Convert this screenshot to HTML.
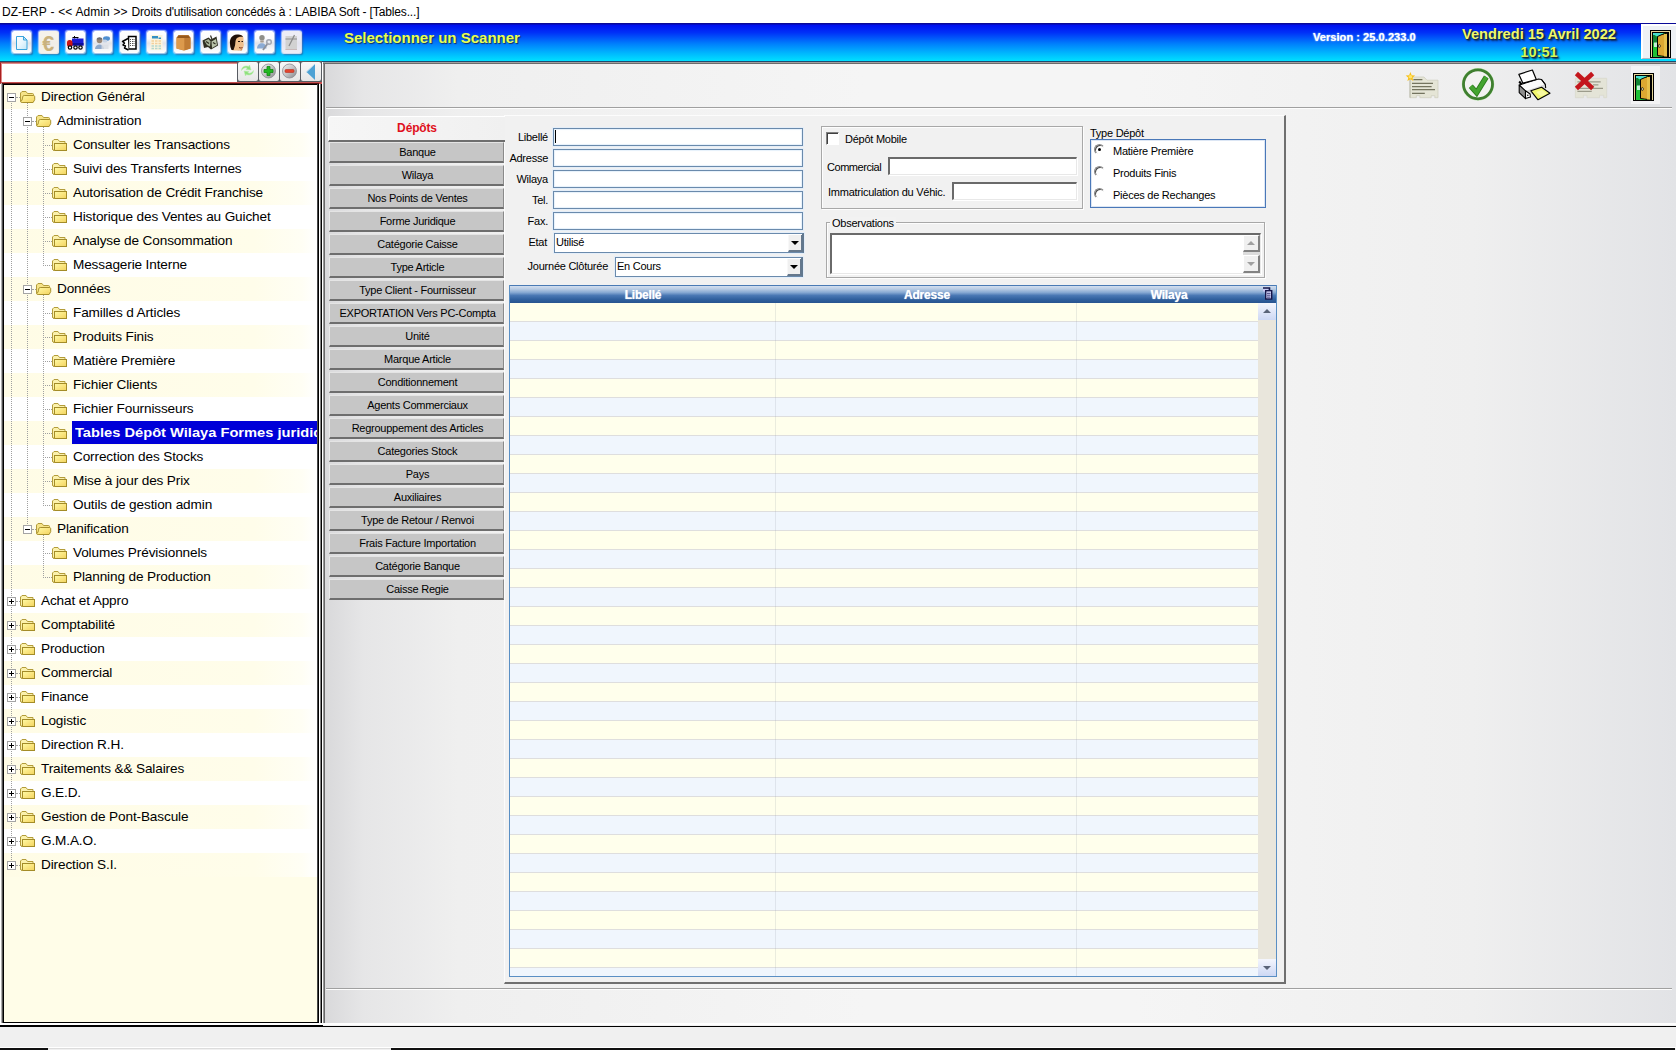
<!DOCTYPE html><html lang="fr"><head><meta charset="utf-8"><title>DZ-ERP</title><style>
*{box-sizing:border-box;margin:0;padding:0}
html,body{width:1676px;height:1050px;overflow:hidden;background:#f0f0f0;font-family:"Liberation Sans",sans-serif;}
body{position:relative}
.abs,.abs *{position:absolute}
#title{left:0;top:0;width:1676px;height:23px;background:#fff}
#title span{left:2px;top:5px;font-size:12px;line-height:14px;color:#000;white-space:pre;letter-spacing:-0.145px}
#title span i{position:static;font-style:normal;word-spacing:0.6px;letter-spacing:0}
#hdr{left:0;top:23px;width:1676px;height:38px;background:linear-gradient(#0a0a98 0,#0a0a98 1px,#0010f0 2px,#0030f8 25%,#0080fc 55%,#00b8fe 80%,#00e0ff 100%)}
#hdrline{left:0;top:61px;width:1676px;height:1px;background:#1c4a70}
#hdrline2{left:0;top:62px;width:1676px;height:1px;background:#9a9a9a}
.tb{width:19px;height:22px;top:8px;border-radius:2px;background:linear-gradient(#ffffff 0,#fbfbfd 35%,#e2e4ea 55%,#f4f5f8 80%,#ffffff 100%);box-shadow:0 0 1.500px 1px rgba(215,228,255,.9),1.500px 2px 1.500px 0 rgba(20,50,110,.55)}
.tb svg{left:0;top:0}
#scan{left:344px;top:6px;font:bold 15px/17px "Liberation Sans",sans-serif;color:#e8ff50;white-space:pre;text-shadow:1px 1px 1px #103060}
#ver{left:1313px;top:8px;font:bold 11px/13px "Liberation Sans",sans-serif;color:#fff;white-space:pre;text-shadow:0 0 1px #b8d8ff,0 0 2px #80b0ff;letter-spacing:.06px}
#date{left:1439px;top:2px;width:200px;text-align:center;font:bold 14.6px/18px "Liberation Sans",sans-serif;color:#eff86c;white-space:pre;text-shadow:1px 1px 1px #1c2430,2px 2px 2px #0c2858}
#date i{position:static;font-style:normal;color:#d4f858}
#exitbox{left:1641px;top:1px;width:35px;height:35px;background:#eef1f5;border-left:2px solid #fff;border-top:2px solid #fff;border-bottom:1px solid #b0b8c0}
/* left */
#left{left:0;top:62px;width:323px;height:963px;background:#fff}
#search{left:0;top:0;width:322px;height:22px;border-left:1px solid #a82020;border-top:1px solid #a05050;border-bottom:2px solid #c85050;background:#fff;box-shadow:inset 1px 1px 0 #e08888}
#searchr{left:237px;top:61px;width:85px;height:21px;background:#585c62}
.sb{top:1px;width:20px;height:19px;background:linear-gradient(#f8f8f8,#e6e6e6);border-radius:2px}
#tree{left:2px;top:21px;width:317px;height:940px;border:1px solid #000;border-left:2px solid #000;border-top:2px solid #000;border-left-color:#000;background:#fffde8;overflow:hidden;box-shadow:-1px 0 0 #b0b0b0}
#treeb{left:2px;top:83px;width:1px;height:940px;background:#505050}
#treet{left:2px;top:83px;width:317px;height:1px;background:#501010}
#treer{left:317px;top:84px;width:1px;height:938px;background:#484848}
.row{left:0;width:313px;height:24px}
.row.y{background:linear-gradient(90deg,#fffce6 0,#fffdea 80%,#fffef4 95%,#fff 100%)}
.row.w{background:#fff}
.lbl{top:3px;font-size:13.6px;line-height:18px;color:#000;white-space:pre;letter-spacing:-0.13px}
.sel{top:0;height:23px;background:#0000d8;color:#fff;font-weight:bold;padding:0;width:400px}
.sel span{left:2.5px;top:3px;font:bold 13.33px/18px "Liberation Sans",sans-serif;white-space:pre;transform-origin:0 0;transform:scaleX(1.1)}
.exp{width:9px;height:9px;border:1px solid #a4a4a4;background:#fff;top:8px;z-index:2}
.exp i{left:1px;top:3px;width:5px;height:1px;background:#000}
.exp b{left:3px;top:1px;width:1px;height:5px;background:#000}
.vl{width:0;border-left:1px dotted #a0a0a0}
.hl{height:0;border-top:1px dotted #a0a0a0}
#lsplit{left:319px;top:84px;width:4px;height:941px;background:linear-gradient(90deg,#fff 0,#fff 25%,#808080 25%,#808080 50%,#000 50%,#000 75%,#fff 75%)}
/* main */
#main{left:323px;top:62px;width:1353px;height:962px;background:linear-gradient(90deg,#d8d8da 0,#e6e6e7 3%,#efefef 10%,#f5f5f5 40%,#f5f5f5 60%,#efefef 85%,#e2e3e6 100%)}
#mainl{left:323px;top:62px;width:2px;height:962px;background:linear-gradient(90deg,#989898 50%,#686868 50%)}
#mainl2{left:323px;top:62px;width:1353px;height:2px;background:linear-gradient(#a0a0a0 50%,#6c6c6c 50%)}
#sep1{left:326px;top:107px;width:1346px;height:1px;background:#a0a0a0}
#sep1b{left:326px;top:108px;width:1346px;height:1px;background:#fdfdfd}
#sep2{left:326px;top:988px;width:1346px;height:1px;background:#a0a0a0}
#sep2b{left:326px;top:989px;width:1346px;height:1px;background:#fdfdfd}
#panel{left:504px;top:115px;width:782px;height:869px;border-right:2px solid #707070;border-bottom:2px solid #707070;border-left:1px solid #fcfcfc;border-top:1px solid #fcfcfc;background:#f1f1f1}
.btn{left:329px;width:175px;height:21px;background:#c6c6c6;border-top:1px solid #e4e4e4;border-left:1px solid #e8e8e8;border-bottom:2px solid #6e6e6e;border-right:1px solid #8a8a8a;font-size:11px;line-height:18px;text-align:center;color:#000;white-space:pre;letter-spacing:-0.25px;padding-left:2px}
#dep{left:328px;top:116px;width:177px;height:26px;border-top:1px solid #fff;border-left:1px solid #fff;border-bottom:2px solid #6e6e6e;border-radius:3px 0 0 0;background:linear-gradient(90deg,#f6f6f6,#f0f0f0);font:bold 12px/23px "Liberation Sans",sans-serif;color:#e01020;text-align:center;letter-spacing:-0.15px}
.lab{font-size:11px;line-height:13px;color:#000;white-space:pre;letter-spacing:-0.25px}
.labr{text-align:right;width:120px}
.inp{background:#fff;border:1px solid #6a8aac;box-shadow:inset 0 0 1px 1px #e6f1fb,0 0 0 1px #e4eef9;height:18px}
.sunk{background:#fff;border-top:2px solid #6a6a6a;border-left:2px solid #6a6a6a;border-right:1px solid #e8e8e8;border-bottom:1px solid #e8e8e8;box-shadow:1px 1px 0 #fff}
.combo{background:#fff;border:1px solid #6a8aac;border-right:2px solid #62788e;box-shadow:0 0 0 1px #e4eef9;height:20px}
.combo .lab{left:1px;top:2px}
.cbtn{right:0;top:1px;width:14px;height:17px;background:#f0f0f0;border-bottom:2px solid #66788c;border-right:1px solid #66788c;border-left:1px solid #f8f8f8}
.cbtn i{left:2px;top:6px;width:0;height:0;border-left:4px solid transparent;border-right:4px solid transparent;border-top:4px solid #000}
.grp{border:1px solid #a8a8a8;box-shadow:inset 1px 1px 0 #fdfdfd,1px 1px 0 #fdfdfd}
.radio{width:11px;height:11px;border-radius:50%;background:#fff;border:1px solid #8a8a8a;border-right-color:#fff;border-bottom-color:#fff;box-shadow:inset 1px 1px 0 #505050;transform:rotate(0deg)}
.radio i{left:3px;top:3px;width:3px;height:3px;border-radius:50%;background:#000}
/* grid */
#grid{left:509px;top:285px;width:768px;height:692px;border:1px solid #5a8fc4;border-top:none;background:#fff;overflow:hidden}
#ghead{left:0;top:0;width:766px;height:18px;background:linear-gradient(#4a7ab4 0,#4a7ab4 1px,#d2deef 1px,#b9cce4 22%,#86a8d2 42%,#4a78b4 58%,#30609e 80%,#27548f 100%)}
.gh{top:3px;font:bold 12px/14px "Liberation Sans",sans-serif;color:#fff;white-space:pre;text-shadow:0 0 1px #e6eef8;letter-spacing:-0.2px;transform:translateX(-50%)}
.gr{left:0;width:748px;height:19px;border-bottom:1px solid #dedede}
.gr.y{background:#ffffec}
.gr.b{background:#f0f6fd}
.gv{top:18px;width:1px;height:674px;background:rgba(150,160,170,.2)}
#gsb{left:748px;top:18px;width:18px;height:673px;background:#e9e6dc}
.gsbtn{left:0;width:18px;height:17px;background:linear-gradient(#f4f6fd,#cdd8f4)}
</style></head><body class="abs">
<svg width="0" height="0" style="left:0;top:0"><defs><linearGradient id="cg" x1="0" y1="0" x2="1" y2="1"><stop offset="0" stop-color="#f2f2f2"/><stop offset=".5" stop-color="#c4c4c6"/><stop offset="1" stop-color="#86868a"/></linearGradient><linearGradient id="pg" x1="0" y1="0" x2="1" y2="1"><stop offset="0" stop-color="#ffffff"/><stop offset=".5" stop-color="#e8f6fd"/><stop offset="1" stop-color="#bfe6f8"/></linearGradient><linearGradient id="fg" x1="0" y1="0" x2="1" y2="1"><stop offset="0" stop-color="#fffba4"/><stop offset=".6" stop-color="#f9e27a"/><stop offset="1" stop-color="#f1d460"/></linearGradient></defs></svg>
<div id="title"><span><i>DZ-ERP - &lt;&lt; Admin &gt;&gt; </i>Droits d'utilisation concédés à : LABIBA Soft - [Tables...]</span></div>
<div id="hdr">
<div class="tb" style="left:12px"><svg width="20" height="23" viewBox="0 0 20 23"><path d="M4.500 5.500h7l3.500 3.500v9.500h-10.500z" fill="url(#pg)" stroke="#3aa4dc" stroke-width="1"/><path d="M11.500 5.500v3.500h3.500z" fill="#bfe4f8" stroke="#3aa4dc" stroke-width="1" stroke-linejoin="round"/></svg></div>
<div class="tb" style="left:39px"><svg width="20" height="23" viewBox="0 0 20 23"><rect x="0" y="0" width="20" height="23" rx="2" fill="#f3efe6" opacity=".8"/><text x="9.300" y="19.600" font-family="Liberation Sans,sans-serif" font-weight="bold" font-size="21.500" text-anchor="middle" fill="#c9b27e">€</text></svg></div>
<div class="tb" style="left:66px"><svg width="20" height="23" viewBox="0 0 20 23"><path d="M6.500 6.500h6M8.500 5v2.500M11.500 6.500v1" stroke="#000" stroke-width="1" fill="none"/><rect x="6" y="7.500" width="11.500" height="7" fill="#1a1ad2"/><rect x="6" y="12" width="11.500" height="2.500" fill="#0c0c9a"/><rect x="1" y="9" width="5.500" height="7" rx="2.500" fill="#cc1414"/><circle cx="4" cy="16.500" r="1.700" fill="#fff" stroke="#000" stroke-width="1.200"/><circle cx="9.500" cy="16.500" r="1.700" fill="#fff" stroke="#000" stroke-width="1.200"/><circle cx="14.500" cy="16.500" r="1.700" fill="#fff" stroke="#000" stroke-width="1.200"/></svg></div>
<div class="tb" style="left:93px"><svg width="20" height="23" viewBox="0 0 20 23"><ellipse cx="13.500" cy="7.500" rx="3.500" ry="2.300" fill="#4f8fd0"/><ellipse cx="12" cy="10" rx="2.500" ry="1.500" fill="#c7d4e6"/><circle cx="6.500" cy="9.500" r="2.800" fill="#9a8878"/><path d="M3.500 8.500c.5-3 5.500-3 6 0z" fill="#6c6c70"/><path d="M2 18c0-6 9-6 9 0z" fill="#8fa9cc"/><path d="M8.500 13.500h7v4.500h-7z" fill="#d9dde3" opacity=".8"/></svg></div>
<div class="tb" style="left:120px"><svg width="20" height="23" viewBox="0 0 20 23"><path d="M8.500 5.500h7.500v12.500h-7.500z" fill="#fff" stroke="#000" stroke-width="1.500"/><path d="M8 7.500l-5.500 3 2 1.500-1.500 2 2.500 1-1 2 4 2" fill="#fff" stroke="#000" stroke-width="1.500" stroke-linejoin="round"/><path d="M10.500 8v8M12.500 8v8M14 8v8" stroke="#555" stroke-width="1" stroke-dasharray="1 1"/></svg></div>
<div class="tb" style="left:147px"><svg width="20" height="23" viewBox="0 0 20 23"><rect x="3.500" y="4" width="12" height="15" fill="#fbf4de"/><rect x="5" y="5" width="6" height="2.500" fill="#3391c4"/><rect x="11.500" y="6.500" width="2.500" height="1.500" fill="#3391c4"/><path d="M4.500 10h10M4.500 12.500h10" stroke="#f3cf9c" stroke-width="1.300" stroke-dasharray="2.500 1"/><path d="M4.500 15h10M4.500 17.500h10" stroke="#b4d6cf" stroke-width="1.300" stroke-dasharray="2.500 1"/></svg></div>
<div class="tb" style="left:174px"><svg width="20" height="23" viewBox="0 0 20 23"><path d="M2.500 6.500l2-2.500h10l2 2.500v11l-7 2-7-2z" fill="#c9853a"/><path d="M4.500 4.500h10l1.500 2.500h-13z" fill="#96591c"/><path d="M2.500 7h8v12.500l-8-2z" fill="#dc9a4c"/><path d="M10.500 7h6v10.500l-6 2z" fill="#c07c34"/></svg></div>
<div class="tb" style="left:201px"><svg width="20" height="23" viewBox="0 0 20 23"><path d="M1.500 9.500l6-3 2.500 2 5.500-3 1.500 9-7 4-3-2.500-4 1z" fill="#2f2f22"/><path d="M3.500 10l4-2 2 2.500-.5 5-3-1.500z" fill="#a9b59a"/><path d="M10.500 10.500l4.500-2.500 1 6-5 3z" fill="#b9c3aa"/><path d="M9.500 4.500l2 5" stroke="#2f2f22" stroke-width="1.200"/><path d="M5 10.500l3 2M12 11.500l2.500 1.500" stroke="#2f2f22" stroke-width="1.200"/></svg></div>
<div class="tb" style="left:228px"><svg width="20" height="23" viewBox="0 0 20 23"><path d="M4.500 19.500c-1.500-3-2.500-6-2-9.500c1-4 5-6 9-6c3 0 4 1.500 4 3.500v5c.5 1 .5 2 0 3-.5 2-2 4-4 4z" fill="#efbf8c"/><path d="M2 13c-.5-5 1.500-9 7-9.500c3-.3 5.500.5 6 2.500-2.500-.5-5 0-6.500 1.500-1.500 2-1 5-1.500 7l-1.500 4.500h-2c-1-2-1.500-4-1.500-6z" fill="#1e0f08"/><path d="M10 10.500h2M13.500 10.500h1.500" stroke="#1e0f08" stroke-width="1.200"/><path d="M11 16.500c1.500.8 2.500.5 3.500 0" stroke="#7a2b14" stroke-width="1" fill="none"/><path d="M9 19.500c2 .5 4-.5 5.500-2.500l-.5 2.500z" fill="#c8854e"/></svg></div>
<div class="tb" style="left:255px"><svg width="20" height="23" viewBox="0 0 20 23"><circle cx="7" cy="6.800" r="2.700" fill="#8f8f88"/><path d="M5 9.500h4l-.5 2h-3z" fill="#a89c90"/><path d="M2 17.500c0-7 9.500-7 9.500 0z" fill="#8cabd4"/><path d="M8 19l5-7" stroke="#8e929c" stroke-width="1.800"/><circle cx="14" cy="11" r="2.300" fill="none" stroke="#a4a8b2" stroke-width="1.500"/></svg></div>
<div class="tb" style="left:282px"><svg width="20" height="23" viewBox="0 0 20 23"><rect x="0" y="0" width="20" height="23" rx="2" fill="#e6e6f2" opacity=".7"/><rect x="3.500" y="5" width="11.500" height="14" fill="#d2d2d2"/><rect x="3.500" y="7.300" width="11.500" height="1.400" fill="#a2a2a2"/><path d="M12.500 4l-5.500 11" stroke="#8a8a8a" stroke-width="1.300"/><rect x="3.500" y="18.300" width="11.500" height=".7" fill="#c8b0b0"/></svg></div>
<div id="scan">Selectionner un Scanner</div>
<div id="ver">Version : 25.0.233.0</div>
<div id="date">Vendredi 15 Avril 2022
<i>10:51</i></div>
<div id="exitbox"><svg width="21" height="28" viewBox="0 0 21 28" style="left:7px;top:4px"><rect width="21" height="28" fill="#000"/><rect x="1" y="1" width="19" height="26" fill="#e6d596"/><rect x="2" y="2" width="17" height="26" fill="#000"/><rect x="3" y="3" width="15" height="24" fill="#1fc035"/><rect x="3" y="3" width="10" height="3" fill="#48e0d0"/><path d="M3 5h2l2 3v4l-2 1.500-2-1z" fill="#128434"/><rect x="4" y="12.500" width="3" height="4.500" fill="#c4f2d8"/><path d="M7.500 6.500l4.500-2 5.500-1.500v24l-6-1-4-.5z" fill="#dca832" stroke="#000" stroke-width="1"/><rect x="14" y="4" width="3" height="22.500" fill="#e6c04a"/><ellipse cx="9.300" cy="16" rx="1" ry="1.500" fill="#fff8c0" stroke="#000" stroke-width=".7"/></svg></div>
</div><div id="hdrline"></div><div id="hdrline2"></div>
<div id="left"><div id="search"></div>
<div id="tree">
<div class="row y" style="top:0px">
<div class="exp" style="left:3px"><i></i></div>
<div class="hl" style="left:12px;top:12px;width:4px"></div>
<svg width="16" height="12" viewBox="0 0 16 12" style="left:16px;top:6px"><path d="M.5 10.500v-8.500l1.500-1.500h4l1.500 2h5c.6 0 1 .4 1 1v1.500h-10l-1.500 5.500z" fill="#f6e488" stroke="#b39c3a" stroke-width="1" stroke-linejoin="round"/><path d="M.7 10.600c1.200-.8 1.600-2.200 2-4.400c.2-1.200.6-1.700 1.600-1.700h9c1 0 1.400.5 1.400 1.400v2.800l-1.600 2.800h-11c-.8 0-1.300-.3-1.400-.9z" fill="url(#fg)" stroke="#a8902c" stroke-width="1" stroke-linejoin="round"/></svg>
<div class="lbl" style="left:37px">Direction Général</div>
</div>
<div class="row w" style="top:24px">
<div class="exp" style="left:19px"><i></i></div>
<div class="hl" style="left:28px;top:12px;width:4px"></div>
<svg width="16" height="12" viewBox="0 0 16 12" style="left:32px;top:6px"><path d="M.5 10.500v-8.500l1.500-1.500h4l1.500 2h5c.6 0 1 .4 1 1v1.500h-10l-1.500 5.500z" fill="#f6e488" stroke="#b39c3a" stroke-width="1" stroke-linejoin="round"/><path d="M.7 10.600c1.200-.8 1.600-2.200 2-4.400c.2-1.200.6-1.700 1.600-1.700h9c1 0 1.400.5 1.400 1.400v2.800l-1.600 2.800h-11c-.8 0-1.300-.3-1.400-.9z" fill="url(#fg)" stroke="#a8902c" stroke-width="1" stroke-linejoin="round"/></svg>
<div class="lbl" style="left:53px">Administration</div>
</div>
<div class="row y" style="top:48px">
<div class="hl" style="left:39px;top:12px;width:9px"></div>
<svg width="16" height="12" viewBox="0 0 16 12" style="left:48px;top:6px"><path d="M.5 10.500v-8.500l1.500-1.500h4l1.500 2h5.500v2.500h-10.500v6.500z" fill="#fbf1ac" stroke="#b39c3a" stroke-width="1" stroke-linejoin="round"/><rect x="2.500" y="4.500" width="12" height="7" fill="url(#fg)" stroke="#a48c28" stroke-width="1"/><path d="M.5 10.500l1 1h1.500" fill="none" stroke="#b39c3a"/></svg>
<div class="lbl" style="left:69px">Consulter les Transactions</div>
</div>
<div class="row w" style="top:72px">
<div class="hl" style="left:39px;top:12px;width:9px"></div>
<svg width="16" height="12" viewBox="0 0 16 12" style="left:48px;top:6px"><path d="M.5 10.500v-8.500l1.500-1.500h4l1.500 2h5.500v2.500h-10.500v6.500z" fill="#fbf1ac" stroke="#b39c3a" stroke-width="1" stroke-linejoin="round"/><rect x="2.500" y="4.500" width="12" height="7" fill="url(#fg)" stroke="#a48c28" stroke-width="1"/><path d="M.5 10.500l1 1h1.500" fill="none" stroke="#b39c3a"/></svg>
<div class="lbl" style="left:69px">Suivi des Transferts Internes</div>
</div>
<div class="row y" style="top:96px">
<div class="hl" style="left:39px;top:12px;width:9px"></div>
<svg width="16" height="12" viewBox="0 0 16 12" style="left:48px;top:6px"><path d="M.5 10.500v-8.500l1.500-1.500h4l1.500 2h5.500v2.500h-10.500v6.500z" fill="#fbf1ac" stroke="#b39c3a" stroke-width="1" stroke-linejoin="round"/><rect x="2.500" y="4.500" width="12" height="7" fill="url(#fg)" stroke="#a48c28" stroke-width="1"/><path d="M.5 10.500l1 1h1.500" fill="none" stroke="#b39c3a"/></svg>
<div class="lbl" style="left:69px">Autorisation de Crédit Franchise</div>
</div>
<div class="row w" style="top:120px">
<div class="hl" style="left:39px;top:12px;width:9px"></div>
<svg width="16" height="12" viewBox="0 0 16 12" style="left:48px;top:6px"><path d="M.5 10.500v-8.500l1.500-1.500h4l1.500 2h5.500v2.500h-10.500v6.500z" fill="#fbf1ac" stroke="#b39c3a" stroke-width="1" stroke-linejoin="round"/><rect x="2.500" y="4.500" width="12" height="7" fill="url(#fg)" stroke="#a48c28" stroke-width="1"/><path d="M.5 10.500l1 1h1.500" fill="none" stroke="#b39c3a"/></svg>
<div class="lbl" style="left:69px">Historique des Ventes au Guichet</div>
</div>
<div class="row y" style="top:144px">
<div class="hl" style="left:39px;top:12px;width:9px"></div>
<svg width="16" height="12" viewBox="0 0 16 12" style="left:48px;top:6px"><path d="M.5 10.500v-8.500l1.500-1.500h4l1.500 2h5.500v2.500h-10.500v6.500z" fill="#fbf1ac" stroke="#b39c3a" stroke-width="1" stroke-linejoin="round"/><rect x="2.500" y="4.500" width="12" height="7" fill="url(#fg)" stroke="#a48c28" stroke-width="1"/><path d="M.5 10.500l1 1h1.500" fill="none" stroke="#b39c3a"/></svg>
<div class="lbl" style="left:69px">Analyse de Consommation</div>
</div>
<div class="row w" style="top:168px">
<div class="hl" style="left:39px;top:12px;width:9px"></div>
<svg width="16" height="12" viewBox="0 0 16 12" style="left:48px;top:6px"><path d="M.5 10.500v-8.500l1.500-1.500h4l1.500 2h5.500v2.500h-10.500v6.500z" fill="#fbf1ac" stroke="#b39c3a" stroke-width="1" stroke-linejoin="round"/><rect x="2.500" y="4.500" width="12" height="7" fill="url(#fg)" stroke="#a48c28" stroke-width="1"/><path d="M.5 10.500l1 1h1.500" fill="none" stroke="#b39c3a"/></svg>
<div class="lbl" style="left:69px">Messagerie Interne</div>
</div>
<div class="row y" style="top:192px">
<div class="exp" style="left:19px"><i></i></div>
<div class="hl" style="left:28px;top:12px;width:4px"></div>
<svg width="16" height="12" viewBox="0 0 16 12" style="left:32px;top:6px"><path d="M.5 10.500v-8.500l1.500-1.500h4l1.500 2h5c.6 0 1 .4 1 1v1.500h-10l-1.500 5.500z" fill="#f6e488" stroke="#b39c3a" stroke-width="1" stroke-linejoin="round"/><path d="M.7 10.600c1.200-.8 1.600-2.200 2-4.400c.2-1.200.6-1.700 1.600-1.700h9c1 0 1.400.5 1.400 1.400v2.800l-1.600 2.800h-11c-.8 0-1.300-.3-1.400-.9z" fill="url(#fg)" stroke="#a8902c" stroke-width="1" stroke-linejoin="round"/></svg>
<div class="lbl" style="left:53px">Données</div>
</div>
<div class="row w" style="top:216px">
<div class="hl" style="left:39px;top:12px;width:9px"></div>
<svg width="16" height="12" viewBox="0 0 16 12" style="left:48px;top:6px"><path d="M.5 10.500v-8.500l1.500-1.500h4l1.500 2h5.500v2.500h-10.500v6.500z" fill="#fbf1ac" stroke="#b39c3a" stroke-width="1" stroke-linejoin="round"/><rect x="2.500" y="4.500" width="12" height="7" fill="url(#fg)" stroke="#a48c28" stroke-width="1"/><path d="M.5 10.500l1 1h1.500" fill="none" stroke="#b39c3a"/></svg>
<div class="lbl" style="left:69px">Familles d Articles</div>
</div>
<div class="row y" style="top:240px">
<div class="hl" style="left:39px;top:12px;width:9px"></div>
<svg width="16" height="12" viewBox="0 0 16 12" style="left:48px;top:6px"><path d="M.5 10.500v-8.500l1.500-1.500h4l1.500 2h5.500v2.500h-10.500v6.500z" fill="#fbf1ac" stroke="#b39c3a" stroke-width="1" stroke-linejoin="round"/><rect x="2.500" y="4.500" width="12" height="7" fill="url(#fg)" stroke="#a48c28" stroke-width="1"/><path d="M.5 10.500l1 1h1.500" fill="none" stroke="#b39c3a"/></svg>
<div class="lbl" style="left:69px">Produits Finis</div>
</div>
<div class="row w" style="top:264px">
<div class="hl" style="left:39px;top:12px;width:9px"></div>
<svg width="16" height="12" viewBox="0 0 16 12" style="left:48px;top:6px"><path d="M.5 10.500v-8.500l1.500-1.500h4l1.500 2h5.500v2.500h-10.500v6.500z" fill="#fbf1ac" stroke="#b39c3a" stroke-width="1" stroke-linejoin="round"/><rect x="2.500" y="4.500" width="12" height="7" fill="url(#fg)" stroke="#a48c28" stroke-width="1"/><path d="M.5 10.500l1 1h1.500" fill="none" stroke="#b39c3a"/></svg>
<div class="lbl" style="left:69px">Matière Première</div>
</div>
<div class="row y" style="top:288px">
<div class="hl" style="left:39px;top:12px;width:9px"></div>
<svg width="16" height="12" viewBox="0 0 16 12" style="left:48px;top:6px"><path d="M.5 10.500v-8.500l1.500-1.500h4l1.500 2h5.500v2.500h-10.500v6.500z" fill="#fbf1ac" stroke="#b39c3a" stroke-width="1" stroke-linejoin="round"/><rect x="2.500" y="4.500" width="12" height="7" fill="url(#fg)" stroke="#a48c28" stroke-width="1"/><path d="M.5 10.500l1 1h1.500" fill="none" stroke="#b39c3a"/></svg>
<div class="lbl" style="left:69px">Fichier Clients</div>
</div>
<div class="row w" style="top:312px">
<div class="hl" style="left:39px;top:12px;width:9px"></div>
<svg width="16" height="12" viewBox="0 0 16 12" style="left:48px;top:6px"><path d="M.5 10.500v-8.500l1.500-1.500h4l1.500 2h5.500v2.500h-10.500v6.500z" fill="#fbf1ac" stroke="#b39c3a" stroke-width="1" stroke-linejoin="round"/><rect x="2.500" y="4.500" width="12" height="7" fill="url(#fg)" stroke="#a48c28" stroke-width="1"/><path d="M.5 10.500l1 1h1.500" fill="none" stroke="#b39c3a"/></svg>
<div class="lbl" style="left:69px">Fichier Fournisseurs</div>
</div>
<div class="row y" style="top:336px">
<div class="hl" style="left:39px;top:12px;width:9px"></div>
<svg width="16" height="12" viewBox="0 0 16 12" style="left:48px;top:6px"><path d="M.5 10.500v-8.500l1.500-1.500h4l1.500 2h5.500v2.500h-10.500v6.500z" fill="#fbf1ac" stroke="#b39c3a" stroke-width="1" stroke-linejoin="round"/><rect x="2.500" y="4.500" width="12" height="7" fill="url(#fg)" stroke="#a48c28" stroke-width="1"/><path d="M.5 10.500l1 1h1.500" fill="none" stroke="#b39c3a"/></svg>
<div class="sel" style="left:68px"><span>Tables Dépôt Wilaya Formes juridiques</span></div>
</div>
<div class="row w" style="top:360px">
<div class="hl" style="left:39px;top:12px;width:9px"></div>
<svg width="16" height="12" viewBox="0 0 16 12" style="left:48px;top:6px"><path d="M.5 10.500v-8.500l1.500-1.500h4l1.500 2h5.500v2.500h-10.500v6.500z" fill="#fbf1ac" stroke="#b39c3a" stroke-width="1" stroke-linejoin="round"/><rect x="2.500" y="4.500" width="12" height="7" fill="url(#fg)" stroke="#a48c28" stroke-width="1"/><path d="M.5 10.500l1 1h1.500" fill="none" stroke="#b39c3a"/></svg>
<div class="lbl" style="left:69px">Correction des Stocks</div>
</div>
<div class="row y" style="top:384px">
<div class="hl" style="left:39px;top:12px;width:9px"></div>
<svg width="16" height="12" viewBox="0 0 16 12" style="left:48px;top:6px"><path d="M.5 10.500v-8.500l1.500-1.500h4l1.500 2h5.500v2.500h-10.500v6.500z" fill="#fbf1ac" stroke="#b39c3a" stroke-width="1" stroke-linejoin="round"/><rect x="2.500" y="4.500" width="12" height="7" fill="url(#fg)" stroke="#a48c28" stroke-width="1"/><path d="M.5 10.500l1 1h1.500" fill="none" stroke="#b39c3a"/></svg>
<div class="lbl" style="left:69px">Mise à jour des Prix</div>
</div>
<div class="row w" style="top:408px">
<div class="hl" style="left:39px;top:12px;width:9px"></div>
<svg width="16" height="12" viewBox="0 0 16 12" style="left:48px;top:6px"><path d="M.5 10.500v-8.500l1.500-1.500h4l1.500 2h5.500v2.500h-10.500v6.500z" fill="#fbf1ac" stroke="#b39c3a" stroke-width="1" stroke-linejoin="round"/><rect x="2.500" y="4.500" width="12" height="7" fill="url(#fg)" stroke="#a48c28" stroke-width="1"/><path d="M.5 10.500l1 1h1.500" fill="none" stroke="#b39c3a"/></svg>
<div class="lbl" style="left:69px">Outils de gestion admin</div>
</div>
<div class="row y" style="top:432px">
<div class="exp" style="left:19px"><i></i></div>
<div class="hl" style="left:28px;top:12px;width:4px"></div>
<svg width="16" height="12" viewBox="0 0 16 12" style="left:32px;top:6px"><path d="M.5 10.500v-8.500l1.500-1.500h4l1.500 2h5c.6 0 1 .4 1 1v1.500h-10l-1.500 5.500z" fill="#f6e488" stroke="#b39c3a" stroke-width="1" stroke-linejoin="round"/><path d="M.7 10.600c1.200-.8 1.600-2.200 2-4.400c.2-1.200.6-1.700 1.600-1.700h9c1 0 1.400.5 1.400 1.400v2.800l-1.600 2.800h-11c-.8 0-1.300-.3-1.400-.9z" fill="url(#fg)" stroke="#a8902c" stroke-width="1" stroke-linejoin="round"/></svg>
<div class="lbl" style="left:53px">Planification</div>
</div>
<div class="row w" style="top:456px">
<div class="hl" style="left:39px;top:12px;width:9px"></div>
<svg width="16" height="12" viewBox="0 0 16 12" style="left:48px;top:6px"><path d="M.5 10.500v-8.500l1.500-1.500h4l1.500 2h5.500v2.500h-10.500v6.500z" fill="#fbf1ac" stroke="#b39c3a" stroke-width="1" stroke-linejoin="round"/><rect x="2.500" y="4.500" width="12" height="7" fill="url(#fg)" stroke="#a48c28" stroke-width="1"/><path d="M.5 10.500l1 1h1.500" fill="none" stroke="#b39c3a"/></svg>
<div class="lbl" style="left:69px">Volumes Prévisionnels</div>
</div>
<div class="row y" style="top:480px">
<div class="hl" style="left:39px;top:12px;width:9px"></div>
<svg width="16" height="12" viewBox="0 0 16 12" style="left:48px;top:6px"><path d="M.5 10.500v-8.500l1.500-1.500h4l1.500 2h5.500v2.500h-10.500v6.500z" fill="#fbf1ac" stroke="#b39c3a" stroke-width="1" stroke-linejoin="round"/><rect x="2.500" y="4.500" width="12" height="7" fill="url(#fg)" stroke="#a48c28" stroke-width="1"/><path d="M.5 10.500l1 1h1.500" fill="none" stroke="#b39c3a"/></svg>
<div class="lbl" style="left:69px">Planning de Production</div>
</div>
<div class="row w" style="top:504px">
<div class="exp" style="left:3px"><i></i><b></b></div>
<div class="hl" style="left:12px;top:12px;width:4px"></div>
<svg width="16" height="12" viewBox="0 0 16 12" style="left:16px;top:6px"><path d="M.5 10.500v-8.500l1.500-1.500h4l1.500 2h5.500v2.500h-10.500v6.500z" fill="#fbf1ac" stroke="#b39c3a" stroke-width="1" stroke-linejoin="round"/><rect x="2.500" y="4.500" width="12" height="7" fill="url(#fg)" stroke="#a48c28" stroke-width="1"/><path d="M.5 10.500l1 1h1.500" fill="none" stroke="#b39c3a"/></svg>
<div class="lbl" style="left:37px">Achat et Appro</div>
</div>
<div class="row y" style="top:528px">
<div class="exp" style="left:3px"><i></i><b></b></div>
<div class="hl" style="left:12px;top:12px;width:4px"></div>
<svg width="16" height="12" viewBox="0 0 16 12" style="left:16px;top:6px"><path d="M.5 10.500v-8.500l1.500-1.500h4l1.500 2h5.500v2.500h-10.500v6.500z" fill="#fbf1ac" stroke="#b39c3a" stroke-width="1" stroke-linejoin="round"/><rect x="2.500" y="4.500" width="12" height="7" fill="url(#fg)" stroke="#a48c28" stroke-width="1"/><path d="M.5 10.500l1 1h1.500" fill="none" stroke="#b39c3a"/></svg>
<div class="lbl" style="left:37px">Comptabilité</div>
</div>
<div class="row w" style="top:552px">
<div class="exp" style="left:3px"><i></i><b></b></div>
<div class="hl" style="left:12px;top:12px;width:4px"></div>
<svg width="16" height="12" viewBox="0 0 16 12" style="left:16px;top:6px"><path d="M.5 10.500v-8.500l1.500-1.500h4l1.500 2h5.500v2.500h-10.500v6.500z" fill="#fbf1ac" stroke="#b39c3a" stroke-width="1" stroke-linejoin="round"/><rect x="2.500" y="4.500" width="12" height="7" fill="url(#fg)" stroke="#a48c28" stroke-width="1"/><path d="M.5 10.500l1 1h1.500" fill="none" stroke="#b39c3a"/></svg>
<div class="lbl" style="left:37px">Production</div>
</div>
<div class="row y" style="top:576px">
<div class="exp" style="left:3px"><i></i><b></b></div>
<div class="hl" style="left:12px;top:12px;width:4px"></div>
<svg width="16" height="12" viewBox="0 0 16 12" style="left:16px;top:6px"><path d="M.5 10.500v-8.500l1.500-1.500h4l1.500 2h5.500v2.500h-10.500v6.500z" fill="#fbf1ac" stroke="#b39c3a" stroke-width="1" stroke-linejoin="round"/><rect x="2.500" y="4.500" width="12" height="7" fill="url(#fg)" stroke="#a48c28" stroke-width="1"/><path d="M.5 10.500l1 1h1.500" fill="none" stroke="#b39c3a"/></svg>
<div class="lbl" style="left:37px">Commercial</div>
</div>
<div class="row w" style="top:600px">
<div class="exp" style="left:3px"><i></i><b></b></div>
<div class="hl" style="left:12px;top:12px;width:4px"></div>
<svg width="16" height="12" viewBox="0 0 16 12" style="left:16px;top:6px"><path d="M.5 10.500v-8.500l1.500-1.500h4l1.500 2h5.500v2.500h-10.500v6.500z" fill="#fbf1ac" stroke="#b39c3a" stroke-width="1" stroke-linejoin="round"/><rect x="2.500" y="4.500" width="12" height="7" fill="url(#fg)" stroke="#a48c28" stroke-width="1"/><path d="M.5 10.500l1 1h1.500" fill="none" stroke="#b39c3a"/></svg>
<div class="lbl" style="left:37px">Finance</div>
</div>
<div class="row y" style="top:624px">
<div class="exp" style="left:3px"><i></i><b></b></div>
<div class="hl" style="left:12px;top:12px;width:4px"></div>
<svg width="16" height="12" viewBox="0 0 16 12" style="left:16px;top:6px"><path d="M.5 10.500v-8.500l1.500-1.500h4l1.500 2h5.500v2.500h-10.500v6.500z" fill="#fbf1ac" stroke="#b39c3a" stroke-width="1" stroke-linejoin="round"/><rect x="2.500" y="4.500" width="12" height="7" fill="url(#fg)" stroke="#a48c28" stroke-width="1"/><path d="M.5 10.500l1 1h1.500" fill="none" stroke="#b39c3a"/></svg>
<div class="lbl" style="left:37px">Logistic</div>
</div>
<div class="row w" style="top:648px">
<div class="exp" style="left:3px"><i></i><b></b></div>
<div class="hl" style="left:12px;top:12px;width:4px"></div>
<svg width="16" height="12" viewBox="0 0 16 12" style="left:16px;top:6px"><path d="M.5 10.500v-8.500l1.500-1.500h4l1.500 2h5.500v2.500h-10.500v6.500z" fill="#fbf1ac" stroke="#b39c3a" stroke-width="1" stroke-linejoin="round"/><rect x="2.500" y="4.500" width="12" height="7" fill="url(#fg)" stroke="#a48c28" stroke-width="1"/><path d="M.5 10.500l1 1h1.500" fill="none" stroke="#b39c3a"/></svg>
<div class="lbl" style="left:37px">Direction R.H.</div>
</div>
<div class="row y" style="top:672px">
<div class="exp" style="left:3px"><i></i><b></b></div>
<div class="hl" style="left:12px;top:12px;width:4px"></div>
<svg width="16" height="12" viewBox="0 0 16 12" style="left:16px;top:6px"><path d="M.5 10.500v-8.500l1.500-1.500h4l1.500 2h5.500v2.500h-10.500v6.500z" fill="#fbf1ac" stroke="#b39c3a" stroke-width="1" stroke-linejoin="round"/><rect x="2.500" y="4.500" width="12" height="7" fill="url(#fg)" stroke="#a48c28" stroke-width="1"/><path d="M.5 10.500l1 1h1.500" fill="none" stroke="#b39c3a"/></svg>
<div class="lbl" style="left:37px">Traitements &amp;&amp; Salaires</div>
</div>
<div class="row w" style="top:696px">
<div class="exp" style="left:3px"><i></i><b></b></div>
<div class="hl" style="left:12px;top:12px;width:4px"></div>
<svg width="16" height="12" viewBox="0 0 16 12" style="left:16px;top:6px"><path d="M.5 10.500v-8.500l1.500-1.500h4l1.500 2h5.500v2.500h-10.500v6.500z" fill="#fbf1ac" stroke="#b39c3a" stroke-width="1" stroke-linejoin="round"/><rect x="2.500" y="4.500" width="12" height="7" fill="url(#fg)" stroke="#a48c28" stroke-width="1"/><path d="M.5 10.500l1 1h1.500" fill="none" stroke="#b39c3a"/></svg>
<div class="lbl" style="left:37px">G.E.D.</div>
</div>
<div class="row y" style="top:720px">
<div class="exp" style="left:3px"><i></i><b></b></div>
<div class="hl" style="left:12px;top:12px;width:4px"></div>
<svg width="16" height="12" viewBox="0 0 16 12" style="left:16px;top:6px"><path d="M.5 10.500v-8.500l1.500-1.500h4l1.500 2h5.500v2.500h-10.500v6.500z" fill="#fbf1ac" stroke="#b39c3a" stroke-width="1" stroke-linejoin="round"/><rect x="2.500" y="4.500" width="12" height="7" fill="url(#fg)" stroke="#a48c28" stroke-width="1"/><path d="M.5 10.500l1 1h1.500" fill="none" stroke="#b39c3a"/></svg>
<div class="lbl" style="left:37px">Gestion de Pont-Bascule</div>
</div>
<div class="row w" style="top:744px">
<div class="exp" style="left:3px"><i></i><b></b></div>
<div class="hl" style="left:12px;top:12px;width:4px"></div>
<svg width="16" height="12" viewBox="0 0 16 12" style="left:16px;top:6px"><path d="M.5 10.500v-8.500l1.500-1.500h4l1.500 2h5.500v2.500h-10.500v6.500z" fill="#fbf1ac" stroke="#b39c3a" stroke-width="1" stroke-linejoin="round"/><rect x="2.500" y="4.500" width="12" height="7" fill="url(#fg)" stroke="#a48c28" stroke-width="1"/><path d="M.5 10.500l1 1h1.500" fill="none" stroke="#b39c3a"/></svg>
<div class="lbl" style="left:37px">G.M.A.O.</div>
</div>
<div class="row y" style="top:768px">
<div class="exp" style="left:3px"><i></i><b></b></div>
<div class="hl" style="left:12px;top:12px;width:4px"></div>
<svg width="16" height="12" viewBox="0 0 16 12" style="left:16px;top:6px"><path d="M.5 10.500v-8.500l1.500-1.500h4l1.500 2h5.500v2.500h-10.500v6.500z" fill="#fbf1ac" stroke="#b39c3a" stroke-width="1" stroke-linejoin="round"/><rect x="2.500" y="4.500" width="12" height="7" fill="url(#fg)" stroke="#a48c28" stroke-width="1"/><path d="M.5 10.500l1 1h1.500" fill="none" stroke="#b39c3a"/></svg>
<div class="lbl" style="left:37px">Direction S.I.</div>
</div>
<div class="vl" style="left:7px;top:18px;height:757px"></div>
<div class="vl" style="left:23px;top:18px;height:13px"></div>
<div class="vl" style="left:23px;top:42px;height:157px"></div>
<div class="vl" style="left:23px;top:210px;height:229px"></div>
<div class="vl" style="left:39px;top:42px;height:139px"></div>
<div class="vl" style="left:39px;top:210px;height:211px"></div>
<div class="vl" style="left:39px;top:450px;height:43px"></div>
</div></div>
<div id="searchr">
<div class="sb" style="left:1px"><svg width="20" height="19" viewBox="0 0 20 19"><path d="M3.500 8.500c0-3.500 3.500-5.500 7-4l1-1.500 1.500 5-5-.5 1.200-1.300c-2-1-4.200 0-5.700 2.300z" fill="#8fe07c" stroke="#b8ecae" stroke-width=".6"/><path d="M15.500 8.500c0 3.500-3.500 5.500-7 4l-1 1.500-1.500-5 5 .5-1.200 1.300c2 1 4.200 0 5.700-2.300z" fill="#8fe07c" stroke="#b8ecae" stroke-width=".6"/></svg></div>
<div class="sb" style="left:22px"><svg width="20" height="19" viewBox="0 0 20 19"><circle cx="9.500" cy="9" r="7" fill="url(#cg)" stroke="#8c8c90" stroke-width=".8"/><path d="M8 4.500h3v3h3v3h-3v3h-3v-3h-3v-3h3z" fill="#22b822" stroke="#128a12" stroke-width=".8"/></svg></div>
<div class="sb" style="left:43px"><svg width="20" height="19" viewBox="0 0 20 19"><circle cx="9.500" cy="9" r="7" fill="url(#cg)" stroke="#8c8c90" stroke-width=".8"/><rect x="5" y="7.500" width="9" height="3" rx="1" fill="#e2452f" stroke="#b83020" stroke-width=".6"/></svg></div>
<div class="sb" style="left:64px"><svg width="20" height="19" viewBox="0 0 20 19"><path d="M14 2v16l-8.500-8z" fill="#4ea2d4"/><path d="M14 2l-8.500 8" stroke="#a8d4ee" stroke-width="1" fill="none"/></svg></div>
</div>
<div id="lsplit"></div><div id="treeb"></div><div id="treet"></div><div id="treer"></div>
<div id="main"></div><div id="mainl"></div><div id="mainl2"></div><div id="sep1"></div><div id="sep1b"></div><div id="sep2"></div><div id="sep2b"></div>
<svg width="36" height="32" viewBox="0 0 36 32" style="left:1404px;top:69px"><path d="M6 8h14l3 3.200h11v17.500h-3.200v-2h-3.600v2h-11.300v-2h-3.600v2h-6.300z" fill="#e5e5d6" stroke="#cfcfc0" stroke-width=".8"/><path d="M6 8v20.700" stroke="#b8b8a8" stroke-width=".9"/><path d="M9.400 10.600h9M8 14.400h21M8 17.600h19.600M8 20.500h23M8 24.400h12.800" stroke="#74745f" stroke-width="1.250"/><path d="M6.400 3l1.300 3.200 3.400.300-2.600 2.200.9 3.400-3-1.900-3 1.900.9-3.400-2.600-2.200 3.400-.300z" fill="#f7c11c"/><circle cx="6.400" cy="7.800" r="1.800" fill="#ffe36a"/></svg>
<svg width="36" height="36" viewBox="0 0 36 36" style="left:1460px;top:66px"><circle cx="18" cy="18.300" r="15.600" fill="none" stroke="#9be08a" stroke-width="1.200" opacity=".7"/><circle cx="18" cy="18.300" r="14.500" fill="#f2f3f1" stroke="#3f7f2f" stroke-width="2.800"/><path d="M10.800 20.300l5.800 6.400L26.300 11" fill="none" stroke="#2d7d1d" stroke-width="5.400" stroke-linejoin="miter"/><path d="M10.800 20.300l5.800 6.400L26.300 11" fill="none" stroke="#44a530" stroke-width="3.600" stroke-linejoin="miter"/></svg>
<svg width="36" height="34" viewBox="0 0 36 34" style="left:1516px;top:68px"><path d="M3.200 17L22.500 11l3 .5 3.500 4.500.5 4L9.500 26z" fill="#fbfbfb" stroke="#000" stroke-width="1.100" stroke-linejoin="round"/><path d="M9.500 23L29 16.200l1 4.600-15.500 6z" fill="#d9d9d9"/><path d="M3.200 17v7.600l6.300 6v-7.800z" fill="#8e8e8e" stroke="#000" stroke-width="1.100" stroke-linejoin="round"/><path d="M9.500 22.800v7.800l5-1.600-.4-3z" fill="#fff" stroke="#000" stroke-width="1.100" stroke-linejoin="round"/><circle cx="11.800" cy="27.300" r=".8" fill="#000"/><path d="M14.900 22.800l10.700-3.500 8.400 5.900-12 6.600z" fill="#f1f66e" stroke="#000" stroke-width="1.100" stroke-linejoin="round"/><path d="M20 24l6-2 5 3.500-6 3z" fill="#fbfcb8" opacity=".7"/><path d="M2.900 6.400L16.400 2l3.900 9.500L6.800 15.100z" fill="#fff" stroke="#000" stroke-width="1.200" stroke-linejoin="round"/><path d="M3.200 13.500l2.500 3" stroke="#000" stroke-width="2"/><path d="M25.500 11.500l3.800 5 .4 3.500" fill="none" stroke="#000" stroke-width="1.100"/></svg>
<svg width="36" height="32" viewBox="0 0 36 32" style="left:1573px;top:69px"><path d="M2.400 5.400h12l3 3.900h16.300v19.400h-3v-2.500h-4.200v2.500h-12.500v-2.500h-3.600v2.500h-8z" fill="#e4e4d7" opacity=".55"/><path d="M2.400 9.300h31.300v19.400h-3v-2.500h-4.200v2.500h-12.500v-2.500h-3.600v2.500h-8z" fill="#e4e4d7" stroke="#d8d8cb" stroke-width=".7"/><path d="M4.400 12.900h23.300M20 15.900h5.400M4.400 19.300h25.600M4.400 22.400h14.300" stroke="#9c9c8c" stroke-width="1.250"/><path d="M3.400 4.500l16.300 15M19.700 4.500l-16.300 15" stroke="#c4161c" stroke-width="4.600"/></svg>
<div style="left:1631px;top:66px;width:29px;height:38px;background:#f3f3f4"></div>
<svg width="21" height="28" viewBox="0 0 21 28" style="left:1633px;top:73px"><rect width="21" height="28" fill="#000"/><rect x="1" y="1" width="19" height="26" fill="#e6d596"/><rect x="2" y="2" width="17" height="26" fill="#000"/><rect x="3" y="3" width="15" height="24" fill="#1fc035"/><rect x="3" y="3" width="10" height="3" fill="#48e0d0"/><path d="M3 5h2l2 3v4l-2 1.500-2-1z" fill="#128434"/><rect x="4" y="12.500" width="3" height="4.500" fill="#c4f2d8"/><path d="M7.500 6.500l4.500-2 5.500-1.500v24l-6-1-4-.5z" fill="#dca832" stroke="#000" stroke-width="1"/><rect x="14" y="4" width="3" height="22.500" fill="#e6c04a"/><ellipse cx="9.300" cy="16" rx="1" ry="1.500" fill="#fff8c0" stroke="#000" stroke-width=".7"/></svg>
<div id="panel"></div>
<div id="dep">Dépôts</div>
<div class="btn" style="top:142px">Banque</div>
<div class="btn" style="top:165px">Wilaya</div>
<div class="btn" style="top:188px">Nos Points de Ventes</div>
<div class="btn" style="top:211px">Forme Juridique</div>
<div class="btn" style="top:234px">Catégorie Caisse</div>
<div class="btn" style="top:257px">Type Article</div>
<div class="btn" style="top:280px">Type Client - Fournisseur</div>
<div class="btn" style="top:303px">EXPORTATION Vers PC-Compta</div>
<div class="btn" style="top:326px">Unité</div>
<div class="btn" style="top:349px">Marque Article</div>
<div class="btn" style="top:372px">Conditionnement</div>
<div class="btn" style="top:395px">Agents Commerciaux</div>
<div class="btn" style="top:418px">Regrouppement des Articles</div>
<div class="btn" style="top:441px">Categories Stock</div>
<div class="btn" style="top:464px">Pays</div>
<div class="btn" style="top:487px">Auxiliaires</div>
<div class="btn" style="top:510px">Type de Retour / Renvoi</div>
<div class="btn" style="top:533px">Frais Facture Importation</div>
<div class="btn" style="top:556px">Catégorie Banque</div>
<div class="btn" style="top:579px">Caisse Regie</div>
<div class="lab labr" style="left:428px;top:131px">Libellé</div>
<div class="inp" style="left:553px;top:128px;width:250px"></div>
<div class="lab labr" style="left:428px;top:152px">Adresse</div>
<div class="inp" style="left:553px;top:149px;width:250px"></div>
<div class="lab labr" style="left:428px;top:173px">Wilaya</div>
<div class="inp" style="left:553px;top:170px;width:250px"></div>
<div class="lab labr" style="left:428px;top:194px">Tel.</div>
<div class="inp" style="left:553px;top:191px;width:250px"></div>
<div class="lab labr" style="left:428px;top:215px">Fax.</div>
<div class="inp" style="left:553px;top:212px;width:250px"></div>
<div style="left:555px;top:130px;width:1px;height:13px;background:#000"></div>
<div class="lab labr" style="left:427px;top:236px">Etat</div>
<div class="combo" style="left:554px;top:233px;width:250px"><div class="lab">Utilisé</div><div class="cbtn"><i></i></div></div>
<div class="lab labr" style="left:488px;top:260px">Journée Clôturée</div>
<div class="combo" style="left:615px;top:257px;width:188px"><div class="lab">En Cours</div><div class="cbtn"><i></i></div></div>
<div class="grp" style="left:821px;top:126px;width:262px;height:83px"></div>
<div style="left:826px;top:132px;width:13px;height:13px;background:#fff;border-top:1px solid #808080;border-left:1px solid #808080;border-right:1px solid #fff;border-bottom:1px solid #fff;box-shadow:inset 1px 1px 0 #404040"></div>
<div class="lab" style="left:845px;top:133px">Dépôt Mobile</div>
<div class="lab" style="left:827px;top:161px;letter-spacing:-.45px">Commercial</div>
<div class="sunk" style="left:888px;top:157px;width:189px;height:18px"></div>
<div class="lab" style="left:828px;top:186px">Immatriculation du Véhic.</div>
<div class="sunk" style="left:952px;top:182px;width:125px;height:18px"></div>
<div class="lab" style="left:1090px;top:127px">Type Dépôt</div>
<div style="left:1090px;top:139px;width:176px;height:69px;background:#fff;border:1px solid #4a78b8;box-shadow:inset 0 0 0 1px #dce6f4"></div>
<div class="radio" style="left:1094px;top:144px"><i></i></div>
<div class="lab" style="left:1113px;top:145px">Matière Première</div>
<div class="radio" style="left:1094px;top:166px"></div>
<div class="lab" style="left:1113px;top:167px">Produits Finis</div>
<div class="radio" style="left:1094px;top:188px"></div>
<div class="lab" style="left:1113px;top:189px">Pièces de Rechanges</div>
<div class="grp" style="left:826px;top:222px;width:439px;height:56px"></div>
<div class="lab" style="left:830px;top:217px;background:#f2f2f2;padding:0 2px">Observations</div>
<div class="sunk" style="left:830px;top:233px;width:431px;height:41px"></div>
<div style="left:1243px;top:235px;width:17px;height:38px;background:#dcdcdc"></div>
<div style="left:1243px;top:235px;width:17px;height:17px;background:#f0f0f0;border-top:1px solid #fff;border-left:1px solid #fff;border-right:2px solid #828282;border-bottom:2px solid #828282"><i style="left:3px;top:5px;border-left:4px solid transparent;border-right:4px solid transparent;border-bottom:4px solid #a0a0a0"></i></div>
<div style="left:1243px;top:255px;width:17px;height:18px;background:#f0f0f0;border-top:1px solid #fff;border-left:1px solid #fff;border-right:2px solid #828282;border-bottom:2px solid #828282"><i style="left:3px;top:6px;border-left:4px solid transparent;border-right:4px solid transparent;border-top:4px solid #a0a0a0"></i></div>
<div id="grid">
<div class="gr y" style="top:18px"></div>
<div class="gr b" style="top:37px"></div>
<div class="gr y" style="top:56px"></div>
<div class="gr b" style="top:75px"></div>
<div class="gr y" style="top:94px"></div>
<div class="gr b" style="top:113px"></div>
<div class="gr y" style="top:132px"></div>
<div class="gr b" style="top:151px"></div>
<div class="gr y" style="top:170px"></div>
<div class="gr b" style="top:189px"></div>
<div class="gr y" style="top:208px"></div>
<div class="gr b" style="top:227px"></div>
<div class="gr y" style="top:246px"></div>
<div class="gr b" style="top:265px"></div>
<div class="gr y" style="top:284px"></div>
<div class="gr b" style="top:303px"></div>
<div class="gr y" style="top:322px"></div>
<div class="gr b" style="top:341px"></div>
<div class="gr y" style="top:360px"></div>
<div class="gr b" style="top:379px"></div>
<div class="gr y" style="top:398px"></div>
<div class="gr b" style="top:417px"></div>
<div class="gr y" style="top:436px"></div>
<div class="gr b" style="top:455px"></div>
<div class="gr y" style="top:474px"></div>
<div class="gr b" style="top:493px"></div>
<div class="gr y" style="top:512px"></div>
<div class="gr b" style="top:531px"></div>
<div class="gr y" style="top:550px"></div>
<div class="gr b" style="top:569px"></div>
<div class="gr y" style="top:588px"></div>
<div class="gr b" style="top:607px"></div>
<div class="gr y" style="top:626px"></div>
<div class="gr b" style="top:645px"></div>
<div class="gr y" style="top:664px"></div>
<div class="gr b" style="top:683px"></div>
<div class="gv" style="left:265px"></div><div class="gv" style="left:566px"></div>
<div id="gsb"><div class="gsbtn" style="top:0"><i style="left:5px;top:6px;border-left:4px solid transparent;border-right:4px solid transparent;border-bottom:4px solid #5a6478"></i></div><div class="gsbtn" style="top:656px"><i style="left:5px;top:7px;border-left:4px solid transparent;border-right:4px solid transparent;border-top:4px solid #5a6478"></i></div></div>
<div id="ghead"><div class="gh" style="left:133px">Libellé</div><div class="gh" style="left:417px">Adresse</div><div class="gh" style="left:659px">Wilaya</div>
<svg width="11" height="13" viewBox="0 0 11 13" style="left:752px;top:2px"><path d="M1 1h6.500v3" fill="none" stroke="#16164a" stroke-width="1.600"/><rect x="1" y="2" width="5" height="2.500" fill="#c8c8f4"/><rect x="3.700" y="3.700" width="6" height="8.300" fill="#dcdcff" stroke="#16164a" stroke-width="1.400"/><path d="M5 6.300h3.500M5 8.200h3.500M5 10.100h3.500" stroke="#3a3a78" stroke-width="1"/></svg>
</div></div>
<div style="left:0;top:1023px;width:1676px;height:2px;background:#fff"></div>
<div style="left:0;top:1025px;width:323px;height:2px;background:#000"></div>
<div style="left:323px;top:1026px;width:1353px;height:1px;background:#000"></div>
<div style="left:0;top:1027px;width:1676px;height:23px;background:#f0f0f0"></div>
<div style="left:0;top:1047px;width:1676px;height:1px;background:#fff"></div>
<div style="left:0;top:1048px;width:48px;height:2px;background:#111"></div>
<div style="left:48px;top:1048px;width:343px;height:1px;background:#dcdcdc"></div>
<div style="left:391px;top:1048px;width:1284px;height:2px;background:#111"></div>
</body></html>
